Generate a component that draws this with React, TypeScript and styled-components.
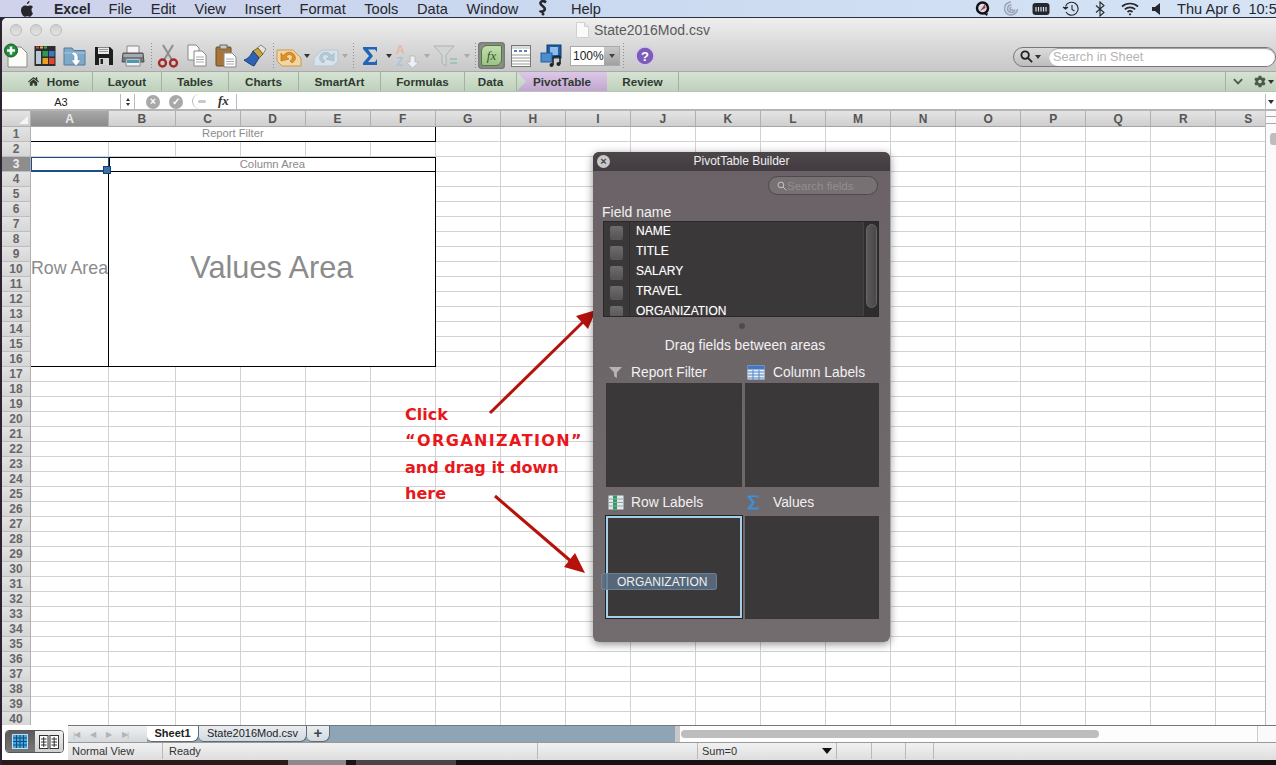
import React from 'react';
import styled, {createGlobalStyle} from 'styled-components';
import {FaCog, FaHome} from 'react-icons/fa';

const GlobalStyle = createGlobalStyle`
  html, body {
    margin: 0;
    padding: 0;
    background: #1a1414;
  }
  * {
    box-sizing: border-box;
  }
`;

const Screen = styled.div`
  position: relative;
  width: 1276px;
  height: 765px;
  overflow: hidden;
  display: flex;
  flex-direction: column;
  background: #2c2230;
  font-family: 'Liberation Sans', Arial, sans-serif;
`;

/* ---------- mac menu bar ---------- */
const MenuBar = styled.div`
  height: 18px;
  flex: none;
  display: flex;
  align-items: center;
  padding-left: 20px;
  background: linear-gradient(to right, #cfd2ea, #c9d8ef 40%, #d6e4f6);
  color: #26272d;
  font-size: 14.6px;
  border-bottom: 1px solid #2b3040;
`;
const MenuItem = styled.span`
  margin-right: 18.6px;
  white-space: nowrap;
`;
const AppName = styled(MenuItem)`
  margin-left: 20px;
  margin-right: 18px;
  font-size: 14px;
  font-weight: 700;
`;
const ScriptItem = styled(MenuItem)`
  margin-right: 22px;
`;
const MenuRight = styled.div`
  margin-left: auto;
  display: flex;
  align-items: center;
  width: 308px;
  flex: none;
`;
const MenuIconSlot = styled.span<{$w: number}>`
  width: ${props => props.$w}px;
  flex: none;
  display: flex;
  justify-content: center;
`;
const Clock = styled.span`
  white-space: pre;
  margin-left: 10px;
`;

/* ---------- window ---------- */
const Window = styled.div`
  flex: 1;
  margin-left: 2px;
  display: flex;
  flex-direction: column;
  background: #fff;
  border-top-left-radius: 5px;
  overflow: hidden;
`;
const TopChrome = styled.div`
  height: 54px;
  flex: none;
  background: linear-gradient(#efefef, #d9d8d8 55%, #c9c8c8);
  display: flex;
  flex-direction: column;
  border-bottom: 1px solid #a9a9a9;
`;
const TitleRow = styled.div`
  height: 24px;
  flex: none;
  display: flex;
  align-items: center;
  padding-left: 8px;
`;
const Light = styled.span`
  width: 12px;
  height: 12px;
  border-radius: 50%;
  background: linear-gradient(#cfcfcf, #e4e4e4);
  border: 1px solid #bdbdbd;
  margin-right: 8px;
  flex: none;
`;
const DocTitle = styled.div`
  margin-left: 506px;
  display: flex;
  align-items: center;
  gap: 5px;
  color: #5a5a5a;
  font-size: 14px;
`;
const ToolRow = styled.div`
  flex: 1;
  display: flex;
  align-items: center;
  padding-bottom: 2px;
`;
const Tool = styled.span<{$w: number}>`
  width: ${props => props.$w}px;
  height: 26px;
  flex: none;
  display: flex;
  align-items: center;
  justify-content: center;
`;
const ToolSep = styled.span`
  width: 6px;
  height: 26px;
  flex: none;
  background: repeating-linear-gradient(#8f8f8f 0 1px, transparent 1px 3px) center / 1px 100% no-repeat;
`;
const Caret = styled.span<{$dim?: boolean}>`
  width: 10px;
  flex: none;
  display: flex;
  justify-content: center;
  &::after {
    content: '';
    border-left: 3px solid transparent;
    border-right: 3px solid transparent;
    border-top: 4px solid ${props => props.$dim ? '#a9a9a9' : '#333'};
  }
`;
const GearCaret = styled(Caret)`
  margin-left: -11px;
`;
const FxButton = styled.span`
  width: 27px;
  height: 27px;
  margin: 0 1px 0 0;
  flex: none;
  display: flex;
  align-items: center;
  justify-content: center;
  background: #8e8e8c;
  border-radius: 4px;
  box-shadow: inset 0 0 3px #555;
`;
const FxInner = styled.span`
  width: 21px;
  height: 21px;
  border-radius: 6px 2px 6px 2px;
  background: linear-gradient(#c3dcae, #9cc488);
  border: 1px solid #4e7a3e;
  color: #2d5a25;
  font-family: 'Liberation Serif', serif;
  font-style: italic;
  font-size: 13px;
  display: flex;
  align-items: center;
  justify-content: center;
`;
const ZoomBox = styled.div`
  width: 50px;
  height: 20px;
  flex: none;
  margin-left: 4px;
  display: flex;
  align-items: center;
  background: #fff;
  border: 1px solid #aaa;
  font-size: 12px;
  color: #222;
  padding-left: 2px;
  justify-content: space-between;
`;
const ZoomArrow = styled.span`
  width: 15px;
  height: 18px;
  background: linear-gradient(#c9c9c9, #a0a0a0);
  display: flex;
  align-items: center;
  justify-content: center;
  &::after {
    content: '';
    border-left: 3px solid transparent;
    border-right: 3px solid transparent;
    border-top: 4px solid #444;
  }
`;
const SearchGroup = styled.div`
  margin-left: auto;
  width: 263px;
  height: 20px;
  flex: none;
  display: flex;
  align-items: center;
  border: 1px solid #777;
  border-radius: 10px;
  background: linear-gradient(#dcdcdc, #bdbdbd);
  padding-left: 6px;
  position: relative;
  top: 1px;
`;
const SearchInput = styled.div`
  margin-left: 6px;
  flex: 1;
  height: 18px;
  background: #fff;
  border-radius: 9px;
  font-size: 12.7px;
  line-height: 18px;
  color: #b4b4b4;
  padding-left: 4px;
  box-shadow: inset 0 1px 1px #999;
`;

/* ---------- ribbon ---------- */
const Ribbon = styled.div`
  height: 20px;
  flex: none;
  display: flex;
  align-items: stretch;
  background: linear-gradient(#d6e3d3, #bed1bc);
  border-bottom: 1px solid #b4c6b2;
`;
const RibbonTab = styled.div<{$w: number, $active?: boolean}>`
  width: ${props => props.$w}px;
  flex: none;
  display: flex;
  align-items: center;
  justify-content: center;
  gap: 8px;
  font-size: 11.7px;
  font-weight: 700;
  color: #2f3a30;
  border-right: ${props => props.$active ? '0' : '1px solid #9fb39e'};
  ${props => props.$active && `
    background: linear-gradient(#dcc9e6, #c2a5d2);
    clip-path: polygon(0 0, 100% 0, 100% 100%, 0 100%, 9px 50%);
  `}
`;
const HomeTab = styled(RibbonTab)`
  padding-left: 13px;
`;
const RibbonEnd = styled.div`
  margin-left: auto;
  width: 51px;
  flex: none;
  display: flex;
  align-items: center;
  padding-left: 7px;
  gap: 11px;
  color: #4b5a4b;
  border-left: 1px solid #9fb39e;
`;

/* ---------- formula bar ---------- */
const FormulaBar = styled.div`
  height: 19px;
  flex: none;
  display: flex;
  align-items: center;
  background: #fff;
  border-bottom: 2px solid #b5b5b5;
  padding-top: 2px;
`;
const NameBox = styled.div`
  width: 118px;
  flex: none;
  text-align: center;
  font-size: 11px;
  color: #222;
`;
const Stepper = styled.div`
  width: 15px;
  height: 15px;
  flex: none;
  display: flex;
  flex-direction: column;
  align-items: center;
  justify-content: center;
  gap: 2px;
  border-left: 1px solid #bbb;
  border-right: 1px solid #bbb;
  margin-right: 11px;
`;
const StepUp = styled.span`
  border-left: 2.5px solid transparent;
  border-right: 2.5px solid transparent;
  border-bottom: 3px solid #333;
`;
const StepDown = styled(StepUp)`
  border-bottom: 0;
  border-top: 3px solid #333;
`;
const RoundBtn = styled.span`
  width: 14px;
  height: 14px;
  border-radius: 50%;
  background: #a8a8a8;
  color: #fff;
  font-size: 10px;
  font-weight: 700;
  line-height: 14px;
  text-align: center;
  flex: none;
  margin-right: 9px;
`;
const FuncBtn = styled.span`
  width: 18px;
  height: 15px;
  flex: none;
  border-left: 1px solid #bbb;
  border-radius: 8px 0 0 8px;
  display: flex;
  align-items: center;
  justify-content: center;
  margin-right: 8px;
  &::after {
    content: '';
    width: 8px;
    height: 3px;
    background: #c9c9c9;
    border-radius: 2px;
  }
`;
const FxLabel = styled.span`
  width: 19px;
  height: 15px;
  flex: none;
  font-family: 'Liberation Serif', serif;
  font-style: italic;
  font-weight: 700;
  font-size: 13px;
  line-height: 14px;
  color: #333;
  border-right: 1px solid #bbb;
`;
const FormulaEnd = styled.span`
  margin-left: auto;
  width: 11px;
  height: 15px;
  flex: none;
  border-left: 1px solid #bbb;
  display: flex;
  align-items: center;
  justify-content: center;
  &::after {
    content: '';
    border-left: 3px solid transparent;
    border-right: 3px solid transparent;
    border-top: 4px solid #333;
  }
`;

/* ---------- sheet ---------- */
const SheetRow = styled.div`
  height: 614px;
  flex: none;
  display: flex;
`;
const SheetGrid = styled.div`
  width: 1263px;
  flex: none;
  overflow: hidden;
  display: grid;
  grid-template-columns: 29px 78px 66.5px repeat(17, 65.06px);
  grid-template-rows: 16px repeat(40, 15px);
  background: #fff;
`;
const Corner = styled.div`
  background: linear-gradient(#e4e4e4, #cfcfcf);
  border-right: 1px solid #b0b0b0;
  border-bottom: 1px solid #b0b0b0;
  position: relative;
  &::after {
    content: '';
    position: absolute;
    right: 2px;
    bottom: 2px;
    border-left: 9px solid transparent;
    border-bottom: 8px solid #f6f6f6;
  }
`;
const ColHead = styled.div<{$on?: boolean}>`
  background: ${props => props.$on ? 'linear-gradient(#a9a9a9, #8b8b8b)' : 'linear-gradient(#e4e4e4, #cfcfcf)'};
  color: ${props => props.$on ? '#e9e9e9' : '#555'};
  border-right: 1px solid #b0b0b0;
  border-bottom: 1px solid #a6a6a6;
  font-size: 12px;
  font-weight: 700;
  text-align: center;
  line-height: 16px;
`;
const RowHead = styled.div<{$on?: boolean}>`
  background: ${props => props.$on ? '#8d8d8d' : 'linear-gradient(#e3e3e3, #d6d6d6)'};
  color: ${props => props.$on ? '#eee' : '#666'};
  border-right: 1px solid #b0b0b0;
  border-bottom: 1px solid #bdbdbd;
  font-size: 12px;
  font-weight: 700;
  text-align: center;
  line-height: 14px;
`;
const Cell = styled.div`
  border-right: 1px solid #d2d2d2;
  border-bottom: 1px solid #d2d2d2;
`;
const SelectedCell = styled.div`
  grid-column: 2;
  grid-row: 4;
  border: 1px solid #1d4d86;
  border-bottom-width: 2px;
  position: relative;
  &::after {
    content: '';
    position: absolute;
    right: -3px;
    bottom: -4px;
    width: 6px;
    height: 6px;
    background: #3d6ea8;
    border: 1px solid #17406f;
    z-index: 2;
  }
`;
const Merged = styled.div<{$cols: string, $rows: string, $size: number, $left?: boolean, $top?: boolean}>`
  grid-column: ${props => props.$cols};
  grid-row: ${props => props.$rows};
  border-right: 1px solid #000;
  border-bottom: 1px solid #000;
  border-left: ${props => props.$left ? '1px solid #000' : '0'};
  border-top: ${props => props.$top ? '1px solid #000' : '0'};
  padding-bottom: 2px;
  display: flex;
  align-items: center;
  justify-content: center;
  color: #8b8b8b;
  font-size: ${props => props.$size}px;
  white-space: nowrap;
  overflow: hidden;
  background: #fff;
`;
const VScroll = styled.div`
  flex: 1;
  background: #fafafa;
  border-left: 1px solid #bcbcbc;
  display: flex;
  flex-direction: column;
  align-items: flex-end;
`;
const VGrip = styled.div`
  width: 100%;
  height: 8px;
  margin-top: 5px;
  border-top: 1px solid #aaa;
  border-bottom: 1px solid #aaa;
`;
const VThumb = styled.div`
  width: 6px;
  height: 12px;
  margin-top: 9px;
  background: #bdbdbd;
  border-radius: 3px 0 0 3px;
`;

/* ---------- bottom bars ---------- */
const BottomRow = styled.div`
  height: 35px;
  flex: none;
  display: flex;
`;
const ViewCorner = styled.div`
  width: 66px;
  flex: none;
  padding: 5px 0 0 3px;
  background: #fff;
`;
const ViewSwitch = styled.div`
  width: 59px;
  height: 23px;
  display: flex;
  border: 1px solid #555;
  border-radius: 4px;
  overflow: hidden;
`;
const ViewBtn = styled.span<{$on?: boolean}>`
  flex: 1;
  display: flex;
  align-items: center;
  justify-content: center;
  background: ${props => props.$on ? 'linear-gradient(#5b5b5b, #777)' : 'linear-gradient(#f0f0f0, #cfcfcf)'};
`;
const BottomMain = styled.div`
  flex: 1;
  display: flex;
  flex-direction: column;
  min-width: 0;
`;
const TabBar = styled.div`
  height: 17px;
  flex: none;
  display: flex;
  background: #8ea5b8;
  border-top: 1px solid #777;
`;
const TabNav = styled.div`
  width: 79px;
  flex: none;
  background: linear-gradient(#f0f0f0, #d4d8dc);
  display: flex;
  align-items: center;
  gap: 11px;
  padding-left: 5px;
  color: #b0b4b8;
  font-size: 8px;
  letter-spacing: -1px;
`;
const SheetTab = styled.div<{$w: number, $on?: boolean}>`
  width: ${props => props.$w}px;
  flex: none;
  height: 16px;
  font-size: 11px;
  font-weight: ${props => props.$on ? 700 : 400};
  text-align: center;
  line-height: 15px;
  color: #222;
  background: ${props => props.$on ? '#fff' : 'linear-gradient(#e9edf1, #d2dae1)'};
  border-right: 1px solid #5f6b75;
  border-bottom: 1px solid #5f6b75;
  border-radius: 0 0 7px 5px;
`;
const PlusTab = styled(SheetTab)`
  font-size: 15px;
  font-weight: 700;
  line-height: 13px;
  color: #444;
`;
const TabFill = styled.div`
  width: 345px;
  flex: none;
`;
const Splitter = styled.div`
  width: 5px;
  flex: none;
  background: #c8c8c8;
`;
const HTrack = styled.div`
  width: 577px;
  flex: none;
  background: #fdfdfd;
  padding: 4px 0 0 1px;
`;
const HThumb = styled.div`
  width: 418px;
  height: 8px;
  border-radius: 4px;
  background: #bdbdbd;
`;
const HGrip = styled.div`
  flex: 1;
  background: #fafafa;
  border-left: 1px solid #ccc;
`;
const StatusBar = styled.div`
  flex: 1;
  display: flex;
  background: linear-gradient(#f1f1f1, #dedede);
  border-top: 1px solid #9a9a9a;
  padding-bottom: 1px;
  font-size: 11px;
  color: #333;
`;
const StatusCell = styled.div<{$w: number, $pad?: number}>`
  width: ${props => props.$w}px;
  flex: none;
  display: flex;
  align-items: center;
  justify-content: space-between;
  padding: 0 4px 0 ${props => props.$pad ?? 4}px;
  border-right: 1px solid #b9b9b9;
  white-space: nowrap;
`;
const DownMark = styled.span`
  border-left: 5px solid transparent;
  border-right: 5px solid transparent;
  border-top: 6px solid #111;
`;
const DesktopStrip = styled.div`
  height: 5px;
  flex: none;
  display: flex;
`;
const DesktopPatch = styled.span<{$w: number, $c: string}>`
  width: ${props => props.$w}px;
  flex: none;
  background: ${props => props.$c};
`;

/* ---------- pivot panel ---------- */
const Panel = styled.div`
  position: absolute;
  left: 593px;
  top: 152px;
  width: 297px;
  height: 490px;
  border-radius: 6px;
  background: linear-gradient(#6a6266, #726c6e);
  box-shadow: 0 2px 9px rgba(0, 0, 0, .45);
  display: flex;
  flex-direction: column;
  color: #f1f1f1;
`;
const PanelHead = styled.div`
  height: 19px;
  flex: none;
  position: relative;
  border-radius: 6px 6px 0 0;
  background: linear-gradient(#4d474b, #423c41);
  text-align: center;
  font-size: 12px;
  line-height: 19px;
  color: #eee;
`;
const PanelClose = styled.span`
  position: absolute;
  left: 4px;
  top: 3px;
  width: 13px;
  height: 13px;
  border-radius: 50%;
  background: #c9c9c9;
  color: #444;
  font-size: 11px;
  font-weight: 700;
  line-height: 13px;
  text-align: center;
`;
const PanelSearchRow = styled.div`
  height: 34px;
  flex: none;
  display: flex;
  justify-content: flex-end;
  padding: 5px 12px 0 0;
`;
const PanelSearch = styled.div`
  width: 110px;
  height: 19px;
  border: 1px solid #4e494c;
  border-radius: 10px;
  background: #777173;
  display: flex;
  align-items: center;
  padding-left: 8px;
  gap: 0;
  font-size: 11.5px;
  color: #938d8f;
`;
const FieldLabel = styled.div`
  height: 16px;
  flex: none;
  padding-left: 9px;
  font-size: 14px;
  line-height: 15px;
  white-space: nowrap;
`;
const FieldList = styled.div`
  width: 276px;
  height: 96px;
  flex: none;
  margin-left: 10px;
  display: flex;
  background: #3a3839;
  border: 1px solid #2a2829;
  overflow: hidden;
`;
const CheckCol = styled.div`
  width: 26px;
  flex: none;
  border-right: 1px solid #2e2c2d;
  display: flex;
  flex-direction: column;
  align-items: center;
  padding-top: 2px;
`;
const CheckBox = styled.span`
  width: 13px;
  height: 13px;
  flex: none;
  margin: 2px 0 5px;
  border-radius: 2px;
  background: linear-gradient(#6e6c6d, #565455);
  box-shadow: 0 1px 0 #5a5859;
`;
const NameCol = styled.div`
  flex: 1;
  padding: 0 0 0 6px;
  font-size: 12px;
  color: #fff;
  text-shadow: 0 0 1px #888;
`;
const NameRow = styled.div`
  height: 20px;
  line-height: 18px;
`;
const ListScroll = styled.div`
  width: 15px;
  flex: none;
  background: #2e2c2d;
  border-left: 1px solid #444;
  padding: 2px 1px 0 2px;
`;
const ListThumb = styled.div`
  height: 84px;
  border-radius: 6px;
  background: linear-gradient(to right, #5a5859, #4a4849);
  border: 1px solid #666;
`;
const SplitDot = styled.div`
  width: 6px;
  height: 6px;
  flex: none;
  margin: 6px auto 0;
  border-radius: 50%;
  background: #4f4a4d;
`;
const DragTitle = styled.div`
  height: 20px;
  flex: none;
  margin-top: 7px;
  padding-left: 7px;
  text-align: center;
  font-size: 13.8px;
  line-height: 20px;
`;
const AreaGrid = styled.div`
  margin: 7px 0 0 13px;
  display: grid;
  grid-template-columns: 136px 134px;
  column-gap: 3px;
`;
const AreaBlock = styled.div`
  display: flex;
  flex-direction: column;
`;
const AreaLabel = styled.div<{$h: number, $raise?: boolean}>`
  height: ${props => props.$h}px;
  display: flex;
  align-items: center;
  padding: ${props => props.$raise ? '0 0 2px 2px' : '1px 0 0 2px'};
  font-size: 13.8px;
  white-space: nowrap;
`;
const AreaIcon = styled.span<{$w: number}>`
  width: ${props => props.$w}px;
  flex: none;
  display: flex;
  justify-content: flex-start;
`;
const AreaBox = styled.div<{$h: number, $on?: boolean}>`
  height: ${props => props.$h}px;
  background: #3a3839;
  border: ${props => props.$on ? '2px solid #a8cfea' : '1px solid #39373a'};
  outline: ${props => props.$on ? '1px solid #222' : 'none'};
`;
const DragGhost = styled.div`
  position: absolute;
  left: 8px;
  top: 421px;
  width: 116px;
  height: 17px;
  border-radius: 3px;
  background: rgba(92, 114, 136, .82);
  border: 1px solid rgba(120, 145, 170, .6);
  font-size: 12px;
  line-height: 16px;
  padding-left: 15px;
  color: #f0f0f0;
`;

/* ---------- annotation ---------- */
const Note = styled.div`
  position: absolute;
  left: 405px;
  top: 402px;
  color: #e8171b;
  font-family: 'DejaVu Sans', sans-serif;
  font-weight: 700;
  font-size: 16px;
  line-height: 26.3px;
  white-space: nowrap;
`;
const NoteCaps = styled.span`
  letter-spacing: 1.4px;
`;
const ArrowLayer = styled.svg`
  position: absolute;
  left: 0;
  top: 0;
  pointer-events: none;
`;

/* ---------- icons ---------- */
const Apple = () => (
  <svg width="14" height="16" viewBox="0 0 14 16">
    <path fill="#26272d" d="M9.6 0c.1 1.4-1.2 3-2.7 2.9C6.7 1.500 8.200.100 9.600 0zM11.500 8.500c0-1.700 1.400-2.500 1.500-2.600-.8-1.200-2.100-1.400-2.500-1.400-1.100-.1-2.100.6-2.700.6-.6 0-1.400-.6-2.300-.6C3.300 4.500 1 6 1 9.300 1 12 3.100 15.800 4.800 15.800c.9 0 1.300-.6 2.500-.6s1.500.6 2.500.6c1.500 0 2.900-2.600 3.200-3.700-1.400-.6-1.500-2.800-1.500-3.600z"/>
  </svg>
);
const ScriptMark = () => (
  <svg width="12" height="17" viewBox="0 0 12 17">
    <path fill="none" stroke="#26272d" strokeWidth="2.600" d="M9 3.500C6 .500 2 3 4 5.500S9 8.500 7.500 11 3.500 13 3 11.500"/>
    <circle cx="6" cy="15" r="1.500" fill="#26272d"/>
  </svg>
);
const SyncIcon = () => (
  <svg width="15" height="15" viewBox="0 0 15 15">
    <circle cx="7.500" cy="7" r="5.500" fill="none" stroke="#111" strokeWidth="2.500"/>
    <path d="M5 10l5-7 .5 4z" fill="#b33"/>
    <path d="M9 13l4-1-1 3z" fill="#111"/>
  </svg>
);
const SpiralIcon = () => (
  <svg width="15" height="15" viewBox="0 0 15 15" fill="none" stroke="#9aa4b4" strokeWidth="1.500">
    <path d="M7 1a6.500 6.500 0 1 0 6.500 7"/>
    <path d="M7.500 4a3.700 3.700 0 1 0 3.400 4.500"/>
    <path d="M7.500 6.500a1.400 1.400 0 1 0 1.300 1.500"/>
  </svg>
);
const BatteryIcon = () => (
  <svg width="18" height="14" viewBox="0 0 18 14">
    <rect x=".5" y="1" width="17" height="12" rx="3" fill="#26282e"/>
    <path d="M4 5v4.500M6.500 5v4.500M9 5v4.500M11.500 5v4.500M14 5v4.500" stroke="#d6e0f0" strokeWidth="1.200"/>
  </svg>
);
const ClockIcon = () => (
  <svg width="18" height="16" viewBox="0 0 18 16" fill="none" stroke="#26282e" strokeWidth="1.100">
    <path d="M3.500 5.500A6.500 6.500 0 1 1 4 11"/>
    <path d="M1 6l2.500 2L6 6" fill="#26282e"/>
    <path d="M10 4v4.500l2.500 1.500"/>
  </svg>
);
const BluetoothIcon = () => (
  <svg width="10" height="16" viewBox="0 0 10 16" fill="none" stroke="#26282e" strokeWidth="1.100">
    <path d="M1 4.500l8 7L5 15V1l4 3.500-8 7"/>
  </svg>
);
const WifiIcon = () => (
  <svg width="18" height="14" viewBox="0 0 18 14" fill="none" stroke="#26282e" strokeWidth="1.700">
    <path d="M1 4.500c4.500-4 11.500-4 16 0"/>
    <path d="M3.800 7.300c3-2.700 7.400-2.700 10.400 0"/>
    <path d="M6.500 10c1.500-1.300 3.500-1.300 5 0"/>
    <circle cx="9" cy="12.300" r="1.100" fill="#26282e" stroke="none"/>
  </svg>
);
const VolumeIcon = () => (
  <svg width="9" height="12" viewBox="0 0 9 12"><path d="M0 4h3l5-4v12L3 8H0z" fill="#26282e"/></svg>
);
const DocIcon = () => (
  <svg width="13" height="16" viewBox="0 0 13 16">
    <path d="M.5.500h8l4 4v11H.5z" fill="#fafafa" stroke="#d0d0d0"/>
    <path d="M8.500.500v4h4" fill="#e4e4e4" stroke="#d0d0d0"/>
  </svg>
);
const NewIcon = () => (
  <svg width="26" height="25" viewBox="0 0 26 25">
    <path d="M5 4h13l6 6v14H5z" fill="#fbfbf8" stroke="#8c8c84"/>
    <circle cx="8" cy="7.500" r="6.500" fill="#1f8a3b" stroke="#0f5a22"/>
    <path d="M8 3.500v8M4 7.500h8" stroke="#fff" strokeWidth="2.600"/>
  </svg>
);
const GalleryIcon = () => (
  <svg width="22" height="22" viewBox="0 0 22 22">
    <rect x=".5" y="1" width="21" height="20" fill="#2d2d2f"/>
    <rect x="2" y="1.500" width="3" height="2" fill="#d43"/><rect x="6" y="1.500" width="3" height="2" fill="#db3"/><rect x="10" y="1.500" width="3" height="2" fill="#4a4"/>
    <rect x="2" y="6" width="5" height="13" fill="#b9c9da"/>
    <rect x="8.500" y="6" width="5.500" height="5.500" fill="#2f9a52"/><rect x="15" y="6" width="5.500" height="5.500" fill="#3b78c4"/>
    <rect x="8.500" y="13" width="5.500" height="6" fill="#e9a21f"/><rect x="15" y="13" width="5.500" height="6" fill="#d9482f"/>
  </svg>
);
const OpenIcon = () => (
  <svg width="24" height="24" viewBox="0 0 24 24">
    <path d="M1 4h8l2 2.500h11V21H1z" fill="#7fa9c9" stroke="#4f7a9c"/>
    <path d="M1 9h21" stroke="#a8c8e0"/>
    <path d="M10 8c3 0 5 2 5 5v3h3l-5 6-5-6h3v-3c0-2-1-3-3-3z" fill="#fff" stroke="#6b8ea8" strokeWidth=".6"/>
  </svg>
);
const SaveIcon = () => (
  <svg width="20" height="20" viewBox="0 0 20 20">
    <path d="M1 1h15l3 3v15H1z" fill="#1e1e20"/>
    <rect x="4" y="1.500" width="11" height="6.500" fill="#e9e9e9"/><path d="M5 3.500h9M5 5.500h9" stroke="#999"/>
    <rect x="5" y="12" width="10" height="7" fill="#d5d5d5"/><rect x="6.500" y="13" width="2.500" height="5" fill="#222"/>
  </svg>
);
const PrintIcon = () => (
  <svg width="24" height="22" viewBox="0 0 24 22">
    <path d="M6 1h12v8H6z" fill="#f5f5f5" stroke="#888"/>
    <path d="M2 8h20l1 9H1z" fill="#70757a" stroke="#4c5054"/>
    <rect x="2.500" y="9" width="19" height="3" fill="#a6aaae"/>
    <path d="M5 14h14v7H5z" fill="#f2f2f2" stroke="#888"/>
    <rect x="6" y="15" width="12" height="3" fill="#4a98b3"/>
  </svg>
);
const CutIcon = () => (
  <svg width="22" height="24" viewBox="0 0 22 24" fill="none">
    <path d="M16 1L7 16M6 1l9 15" stroke="#8d8d8d" strokeWidth="2"/>
    <circle cx="5.500" cy="19" r="3.500" stroke="#a22c2c" strokeWidth="2.400"/>
    <circle cx="16.500" cy="19" r="3.500" stroke="#a22c2c" strokeWidth="2.400"/>
  </svg>
);
const CopyIcon = () => (
  <svg width="20" height="23" viewBox="0 0 20 23">
    <path d="M1 1h8l3 3v12H1z" fill="#fafafa" stroke="#888"/>
    <path d="M7 7h8l4 4v11H7z" fill="#fff" stroke="#888"/>
    <path d="M9 13h8M9 15.500h8M9 18h8" stroke="#aaa"/>
  </svg>
);
const PasteIcon = () => (
  <svg width="22" height="24" viewBox="0 0 22 24">
    <rect x="1" y="3" width="15" height="19" rx="1" fill="#a9743a" stroke="#6d4a22"/>
    <rect x="5" y="1" width="7" height="4" fill="#c9c9c9" stroke="#666"/>
    <path d="M9 9h8l4 4v10H9z" fill="#fff" stroke="#888"/>
    <path d="M11 15h8M11 17.500h8M11 20h8" stroke="#aaa"/>
  </svg>
);
const BrushIcon = () => (
  <svg width="24" height="24" viewBox="0 0 24 24">
    <path d="M14 4l4-3 5 4-3 5z" fill="#e9e4d4" stroke="#888"/>
    <path d="M10 7l5-3 5 6-4 4z" fill="#c9a447" stroke="#77601f"/>
    <path d="M10 7l6 7-5 8c-3-1-7-4-10-6 4-1 7-5 9-9z" fill="#2f62b4" stroke="#1f3f78"/>
  </svg>
);
const UndoIcon = () => (
  <svg width="26" height="22" viewBox="0 0 26 22">
    <path d="M1 5h16l8 8v8H6l-5-5z" fill="#f2d6a2" stroke="#c99a4a"/>
    <path d="M7 11c3-5 10-5 12 0 1 3 0 5-3 7l-2-2c3-2 3-5 1-6-2-1-4 0-5 2l3 2-8 2 0-8z" fill="#e39025" stroke="#b06a12" strokeWidth=".6"/>
  </svg>
);
const RedoIcon = () => (
  <svg width="26" height="22" viewBox="0 0 26 22">
    <g transform="translate(26 0) scale(-1 1)">
      <path d="M1 5h16l8 8v8H6l-5-5z" fill="#d8e2ea" stroke="#b9c6d0"/>
      <path d="M7 11c3-5 10-5 12 0 1 3 0 5-3 7l-2-2c3-2 3-5 1-6-2-1-4 0-5 2l3 2-8 2 0-8z" fill="#b2cad8" stroke="#9bb5c4" strokeWidth=".6"/>
    </g>
  </svg>
);
const SigmaIcon = () => (
  <svg width="16" height="20" viewBox="0 0 16 20"><path d="M1 1h14v5l-2-2.500H6l5 6.500-5 6h7l2-3v6H1v-2l6-7-6-7z" fill="#1f66b8"/></svg>
);
const SortIcon = () => (
  <svg width="26" height="26" viewBox="0 0 26 26" fontFamily="Liberation Sans" fontWeight="700" fontSize="12">
    <text x="1" y="11" fill="#e6b7a2">A</text>
    <text x="1" y="23" fill="#a9c4dc">Z</text>
    <path d="M15 13h5v6h4l-6.500 6L11 19h4z" fill="#eef1f3" stroke="#b8bdc2"/>
  </svg>
);
const FilterIcon = () => (
  <svg width="28" height="22" viewBox="0 0 28 22">
    <path d="M1 1h20l-8 9v11l-4-3v-8z" fill="#d2d5d5" stroke="#aeb2b2"/>
    <path d="M17 14h7M17 18h7" stroke="#9fc3b4" strokeWidth="2"/>
  </svg>
);
const ToolboxIcon = () => (
  <svg width="20" height="22" viewBox="0 0 20 22">
    <rect x=".5" y=".5" width="19" height="21" fill="#fff" stroke="#777"/>
    <rect x="1" y="1" width="18" height="3" fill="#d9d9d9"/>
    <path d="M3 6h3M8 6h3M13 6h3" stroke="#5584b6" strokeWidth="2"/>
    <path d="M1 10h18M1 13h18M1 16h18M1 19h18" stroke="#999"/>
  </svg>
);
const MediaIcon = () => (
  <svg width="22" height="24" viewBox="0 0 22 24">
    <rect x="7" y="1" width="14" height="13" fill="#1f5fa8" stroke="#123b6a"/>
    <rect x="10" y="3" width="8" height="8" fill="#8fbde6"/>
    <rect x="1" y="9" width="11" height="9" fill="#4d8bca" stroke="#1f5fa8"/>
    <path d="M13 13v8M20 12v8M13 13l7-1" stroke="#222" strokeWidth="1.600" fill="none"/>
    <circle cx="11.500" cy="21" r="2" fill="#222"/><circle cx="18.500" cy="20" r="2" fill="#222"/>
  </svg>
);
const HelpIcon = () => (
  <svg width="20" height="20" viewBox="0 0 20 20" fontFamily="Liberation Sans" fontWeight="700" fontSize="13" textAnchor="middle">
    <circle cx="10" cy="10" r="9" fill="#7d5bb8" stroke="#d4c8ea" strokeWidth="1.500"/>
    <text x="10" y="14.500" fill="#fff">?</text>
  </svg>
);
const SearchGlyph = ({size, color, sw}: {size: number, color: string, sw: number}) => (
  <svg width={size} height={size} viewBox="0 0 14 14" fill="none" stroke={color} strokeWidth={sw}>
    <circle cx="5.500" cy="5.500" r="4"/><path d="M8.500 8.500L13 13"/>
  </svg>
);
const FunnelMini = () => (
  <svg width="15" height="13" viewBox="0 0 16 14">
    <path d="M1 1h14L9.500 7v6l-3-2V7z" fill="#b9b4b4"/>
  </svg>
);
const TableMini = () => (
  <svg width="18" height="15" viewBox="0 0 18 15">
    <rect x=".5" y=".5" width="17" height="14" fill="#e8eef5"/>
    <rect x=".5" y=".5" width="17" height="4" fill="#3f79c6"/>
    <path d="M1 7h16M1 10h16M1 13h16M6 5v10M12 5v10" stroke="#4f86cc"/>
  </svg>
);
const RowMini = () => (
  <svg width="16" height="15" viewBox="0 0 16 15">
    <rect x=".5" y=".5" width="15" height="14" fill="#e5e8ea"/>
    <rect x="5" y=".5" width="4" height="14" fill="#2f9a5e"/>
    <path d="M1 4h14M1 7.500h14M1 11h14" stroke="#8aa"/>
  </svg>
);
const SigmaMini = () => (
  <svg width="12" height="15" viewBox="0 0 12 15"><path d="M.5.500h11v3L10 2H4l4 5.500-4 5h6l1.500-2v4H.5v-1.500l4.500-5.500L.5 2z" fill="#3f8fd8"/></svg>
);
const GridView = () => (
  <svg width="16" height="15" viewBox="0 0 16 15">
    <rect x=".5" y=".5" width="15" height="14" fill="#47a4e0" stroke="#bfe0f5"/>
    <path d="M1 4h14M1 7.500h14M1 11h14M4.500 1v13M8 1v13M11.500 1v13" stroke="#0e4f7c"/>
  </svg>
);
const PageView = () => (
  <svg width="20" height="14" viewBox="0 0 20 14" fill="#fff" stroke="#333">
    <rect x=".5" y=".5" width="8.500" height="13"/><rect x="11" y=".5" width="8.500" height="13"/>
    <path d="M2 4h5.500M2 7h5.500M2 10h5.500M4.700 2v10M12.500 4h5.500M12.500 7h5.500M12.500 10h5.500M15.200 2v10" fill="none"/>
  </svg>
);

const columns = 'ABCDEFGHIJKLMNOPQRS'.split('');
const fields = ['NAME', 'TITLE', 'SALARY', 'TRAVEL', 'ORGANIZATION'];
const menus = ['File', 'Edit', 'View', 'Insert', 'Format', 'Tools', 'Data', 'Window'];
const ribbonTabs: [string, number][] = [['Layout', 69], ['Tables', 67], ['Charts', 70], ['SmartArt', 82], ['Formulas', 84], ['Data', 52]];

// rows of the sheet that hold a merged block, so their plain cells can be skipped
const plainCellsInRow = (row: number) => {
  if (row === 1) return 13;
  if (row === 3) return 13;
  if (row >= 4 && row <= 16) return 13;
  return 19;
};

const App: React.FC = () => {
  return (
    <Screen>
      <GlobalStyle/>
      <MenuBar>
        <MenuIconSlot $w={14}><Apple/></MenuIconSlot>
        <AppName>Excel</AppName>
        {menus.map(m => <MenuItem key={m}>{m}</MenuItem>)}
        <ScriptItem><ScriptMark/></ScriptItem>
        <MenuItem>Help</MenuItem>
        <MenuRight>
          <MenuIconSlot $w={28}><SyncIcon/></MenuIconSlot>
          <MenuIconSlot $w={30}><SpiralIcon/></MenuIconSlot>
          <MenuIconSlot $w={30}><BatteryIcon/></MenuIconSlot>
          <MenuIconSlot $w={29}><ClockIcon/></MenuIconSlot>
          <MenuIconSlot $w={30}><BluetoothIcon/></MenuIconSlot>
          <MenuIconSlot $w={30}><WifiIcon/></MenuIconSlot>
          <MenuIconSlot $w={22}><VolumeIcon/></MenuIconSlot>
          <Clock>Thu Apr 6  10:5</Clock>
        </MenuRight>
      </MenuBar>

      <Window>
        <TopChrome>
          <TitleRow>
            <Light/><Light/><Light/>
            <DocTitle><DocIcon/>State2016Mod.csv</DocTitle>
          </TitleRow>
          <ToolRow>
            <Tool $w={28}><NewIcon/></Tool>
            <Tool $w={30}><GalleryIcon/></Tool>
            <Tool $w={29}><OpenIcon/></Tool>
            <Tool $w={29}><SaveIcon/></Tool>
            <Tool $w={30}><PrintIcon/></Tool>
            <ToolSep/>
            <Tool $w={28}><CutIcon/></Tool>
            <Tool $w={29}><CopyIcon/></Tool>
            <Tool $w={29}><PasteIcon/></Tool>
            <Tool $w={30}><BrushIcon/></Tool>
            <ToolSep/>
            <Tool $w={26}><UndoIcon/></Tool>
            <Caret/>
            <Tool $w={28}><RedoIcon/></Tool>
            <Caret $dim={true}/>
            <ToolSep/>
            <Tool $w={28}><SigmaIcon/></Tool>
            <Caret/>
            <Tool $w={28}><SortIcon/></Tool>
            <Caret $dim={true}/>
            <Tool $w={30}><FilterIcon/></Tool>
            <Caret $dim={true}/>
            <ToolSep/>
            <FxButton><FxInner>fx</FxInner></FxButton>
            <Tool $w={30}><ToolboxIcon/></Tool>
            <Tool $w={30}><MediaIcon/></Tool>
            <ZoomBox>100%<ZoomArrow/></ZoomBox>
            <ToolSep/>
            <Tool $w={38}><HelpIcon/></Tool>
            <SearchGroup>
              <SearchGlyph size={13} color="#222" sw={2}/>
              <Caret/>
              <SearchInput>Search in Sheet</SearchInput>
            </SearchGroup>
          </ToolRow>
        </TopChrome>

        <Ribbon>
          <HomeTab $w={91}><FaHome size={11}/>Home</HomeTab>
          {ribbonTabs.map(([label, w]) => <RibbonTab key={label} $w={w}>{label}</RibbonTab>)}
          <RibbonTab $w={90} $active={true}>PivotTable</RibbonTab>
          <RibbonTab $w={72}>Review</RibbonTab>
          <RibbonEnd>
            <svg width="11" height="7" viewBox="0 0 11 7" fill="none" stroke="#4b5a4b" strokeWidth="2"><path d="M1 1l4.500 4.500L10 1"/></svg>
            <FaCog size={13}/>
            <GearCaret/>
          </RibbonEnd>
        </Ribbon>

        <FormulaBar>
          <NameBox>A3</NameBox>
          <Stepper><StepUp/><StepDown/></Stepper>
          <RoundBtn>×</RoundBtn>
          <RoundBtn>✓</RoundBtn>
          <FuncBtn/>
          <FxLabel>fx</FxLabel>
          <FormulaEnd/>
        </FormulaBar>

        <SheetRow>
          <SheetGrid>
            <Merged $cols="2 / 8" $rows="2" $size={11.2}>Report Filter</Merged>
            <SelectedCell/>
            <Merged $cols="3 / 8" $rows="4" $size={11.3} $left={true} $top={true}>Column Area</Merged>
            <Merged $cols="2" $rows="5 / 18" $size={17.8}>Row Area</Merged>
            <Merged $cols="3 / 8" $rows="5 / 18" $size={30.7}>Values Area</Merged>

            <Corner/>
            {columns.map(c => <ColHead key={c} $on={c === 'A'}>{c}</ColHead>)}
            {Array.from({length: 40}, (_, i) => i + 1).map(row => (
              <React.Fragment key={row}>
                <RowHead $on={row === 3}>{row}</RowHead>
                {Array.from({length: plainCellsInRow(row)}, (_, i) => <Cell key={i}/>)}
              </React.Fragment>
            ))}
          </SheetGrid>
          <VScroll>
            <VGrip/>
            <VThumb/>
          </VScroll>
        </SheetRow>

        <BottomRow>
          <ViewCorner>
            <ViewSwitch>
              <ViewBtn $on={true}><GridView/></ViewBtn>
              <ViewBtn><PageView/></ViewBtn>
            </ViewSwitch>
          </ViewCorner>
          <BottomMain>
            <TabBar>
              <TabNav>
                <span>|◀</span><span>◀</span><span>▶</span><span>▶|</span>
              </TabNav>
              <SheetTab $w={52} $on={true}>Sheet1</SheetTab>
              <SheetTab $w={108}>State2016Mod.csv</SheetTab>
              <PlusTab $w={23}>+</PlusTab>
              <TabFill/>
              <Splitter/>
              <HTrack><HThumb/></HTrack>
              <HGrip/>
            </TabBar>
            <StatusBar>
              <StatusCell $w={95}>Normal View</StatusCell>
              <StatusCell $w={375} $pad={6}>Ready</StatusCell>
              <StatusCell $w={160}/>
              <StatusCell $w={139}>Sum=0<DownMark/></StatusCell>
              <StatusCell $w={35}/>
              <StatusCell $w={34}/>
              <StatusCell $w={28}/>
            </StatusBar>
          </BottomMain>
        </BottomRow>

        <DesktopStrip>
          <DesktopPatch $w={286} $c="#2a1a1c"/>
          <DesktopPatch $w={58} $c="#8a8a8a"/>
          <DesktopPatch $w={10} $c="#1a1414"/>
          <DesktopPatch $w={100} $c="#4a4646"/>
          <DesktopPatch $w={820} $c="#161212"/>
        </DesktopStrip>
      </Window>

      <Note>
        Click<br/>
        <NoteCaps>“ORGANIZATION”</NoteCaps><br/>
        and drag it down<br/>
        here
      </Note>
      <ArrowLayer width="1276" height="765" viewBox="0 0 1276 765">
        <path d="M490 413L584 321" stroke="#b5120c" strokeWidth="3"/>
        <path d="M596 310L588 329 576 316z" fill="#b5120c"/>
        <path d="M495 496L573 563" stroke="#b5120c" strokeWidth="3"/>
        <path d="M585 573L564 567 575 553z" fill="#b5120c"/>
      </ArrowLayer>

      <Panel>
        <PanelHead>
          <PanelClose>×</PanelClose>
          PivotTable Builder
        </PanelHead>
        <PanelSearchRow>
          <PanelSearch>
            <SearchGlyph size={10} color="#d0cccc" sw={1.300}/>
            Search fields
          </PanelSearch>
        </PanelSearchRow>
        <FieldLabel>Field name</FieldLabel>
        <FieldList>
          <CheckCol>
            {fields.map(f => <CheckBox key={f}/>)}
          </CheckCol>
          <NameCol>
            {fields.map(f => <NameRow key={f}>{f}</NameRow>)}
          </NameCol>
          <ListScroll><ListThumb/></ListScroll>
        </FieldList>
        <SplitDot/>
        <DragTitle>Drag fields between areas</DragTitle>
        <AreaGrid>
          <AreaBlock>
            <AreaLabel $h={20} $raise={true}><AreaIcon $w={23}><FunnelMini/></AreaIcon>Report Filter</AreaLabel>
            <AreaBox $h={104}/>
          </AreaBlock>
          <AreaBlock>
            <AreaLabel $h={20} $raise={true}><AreaIcon $w={26}><TableMini/></AreaIcon>Column Labels</AreaLabel>
            <AreaBox $h={104}/>
          </AreaBlock>
          <AreaBlock>
            <AreaLabel $h={29}><AreaIcon $w={23}><RowMini/></AreaIcon>Row Labels</AreaLabel>
            <AreaBox $h={102} $on={true}/>
          </AreaBlock>
          <AreaBlock>
            <AreaLabel $h={29}><AreaIcon $w={26}><SigmaMini/></AreaIcon>Values</AreaLabel>
            <AreaBox $h={103}/>
          </AreaBlock>
        </AreaGrid>
        <DragGhost>ORGANIZATION</DragGhost>
      </Panel>
    </Screen>
  );
};

export default App;
